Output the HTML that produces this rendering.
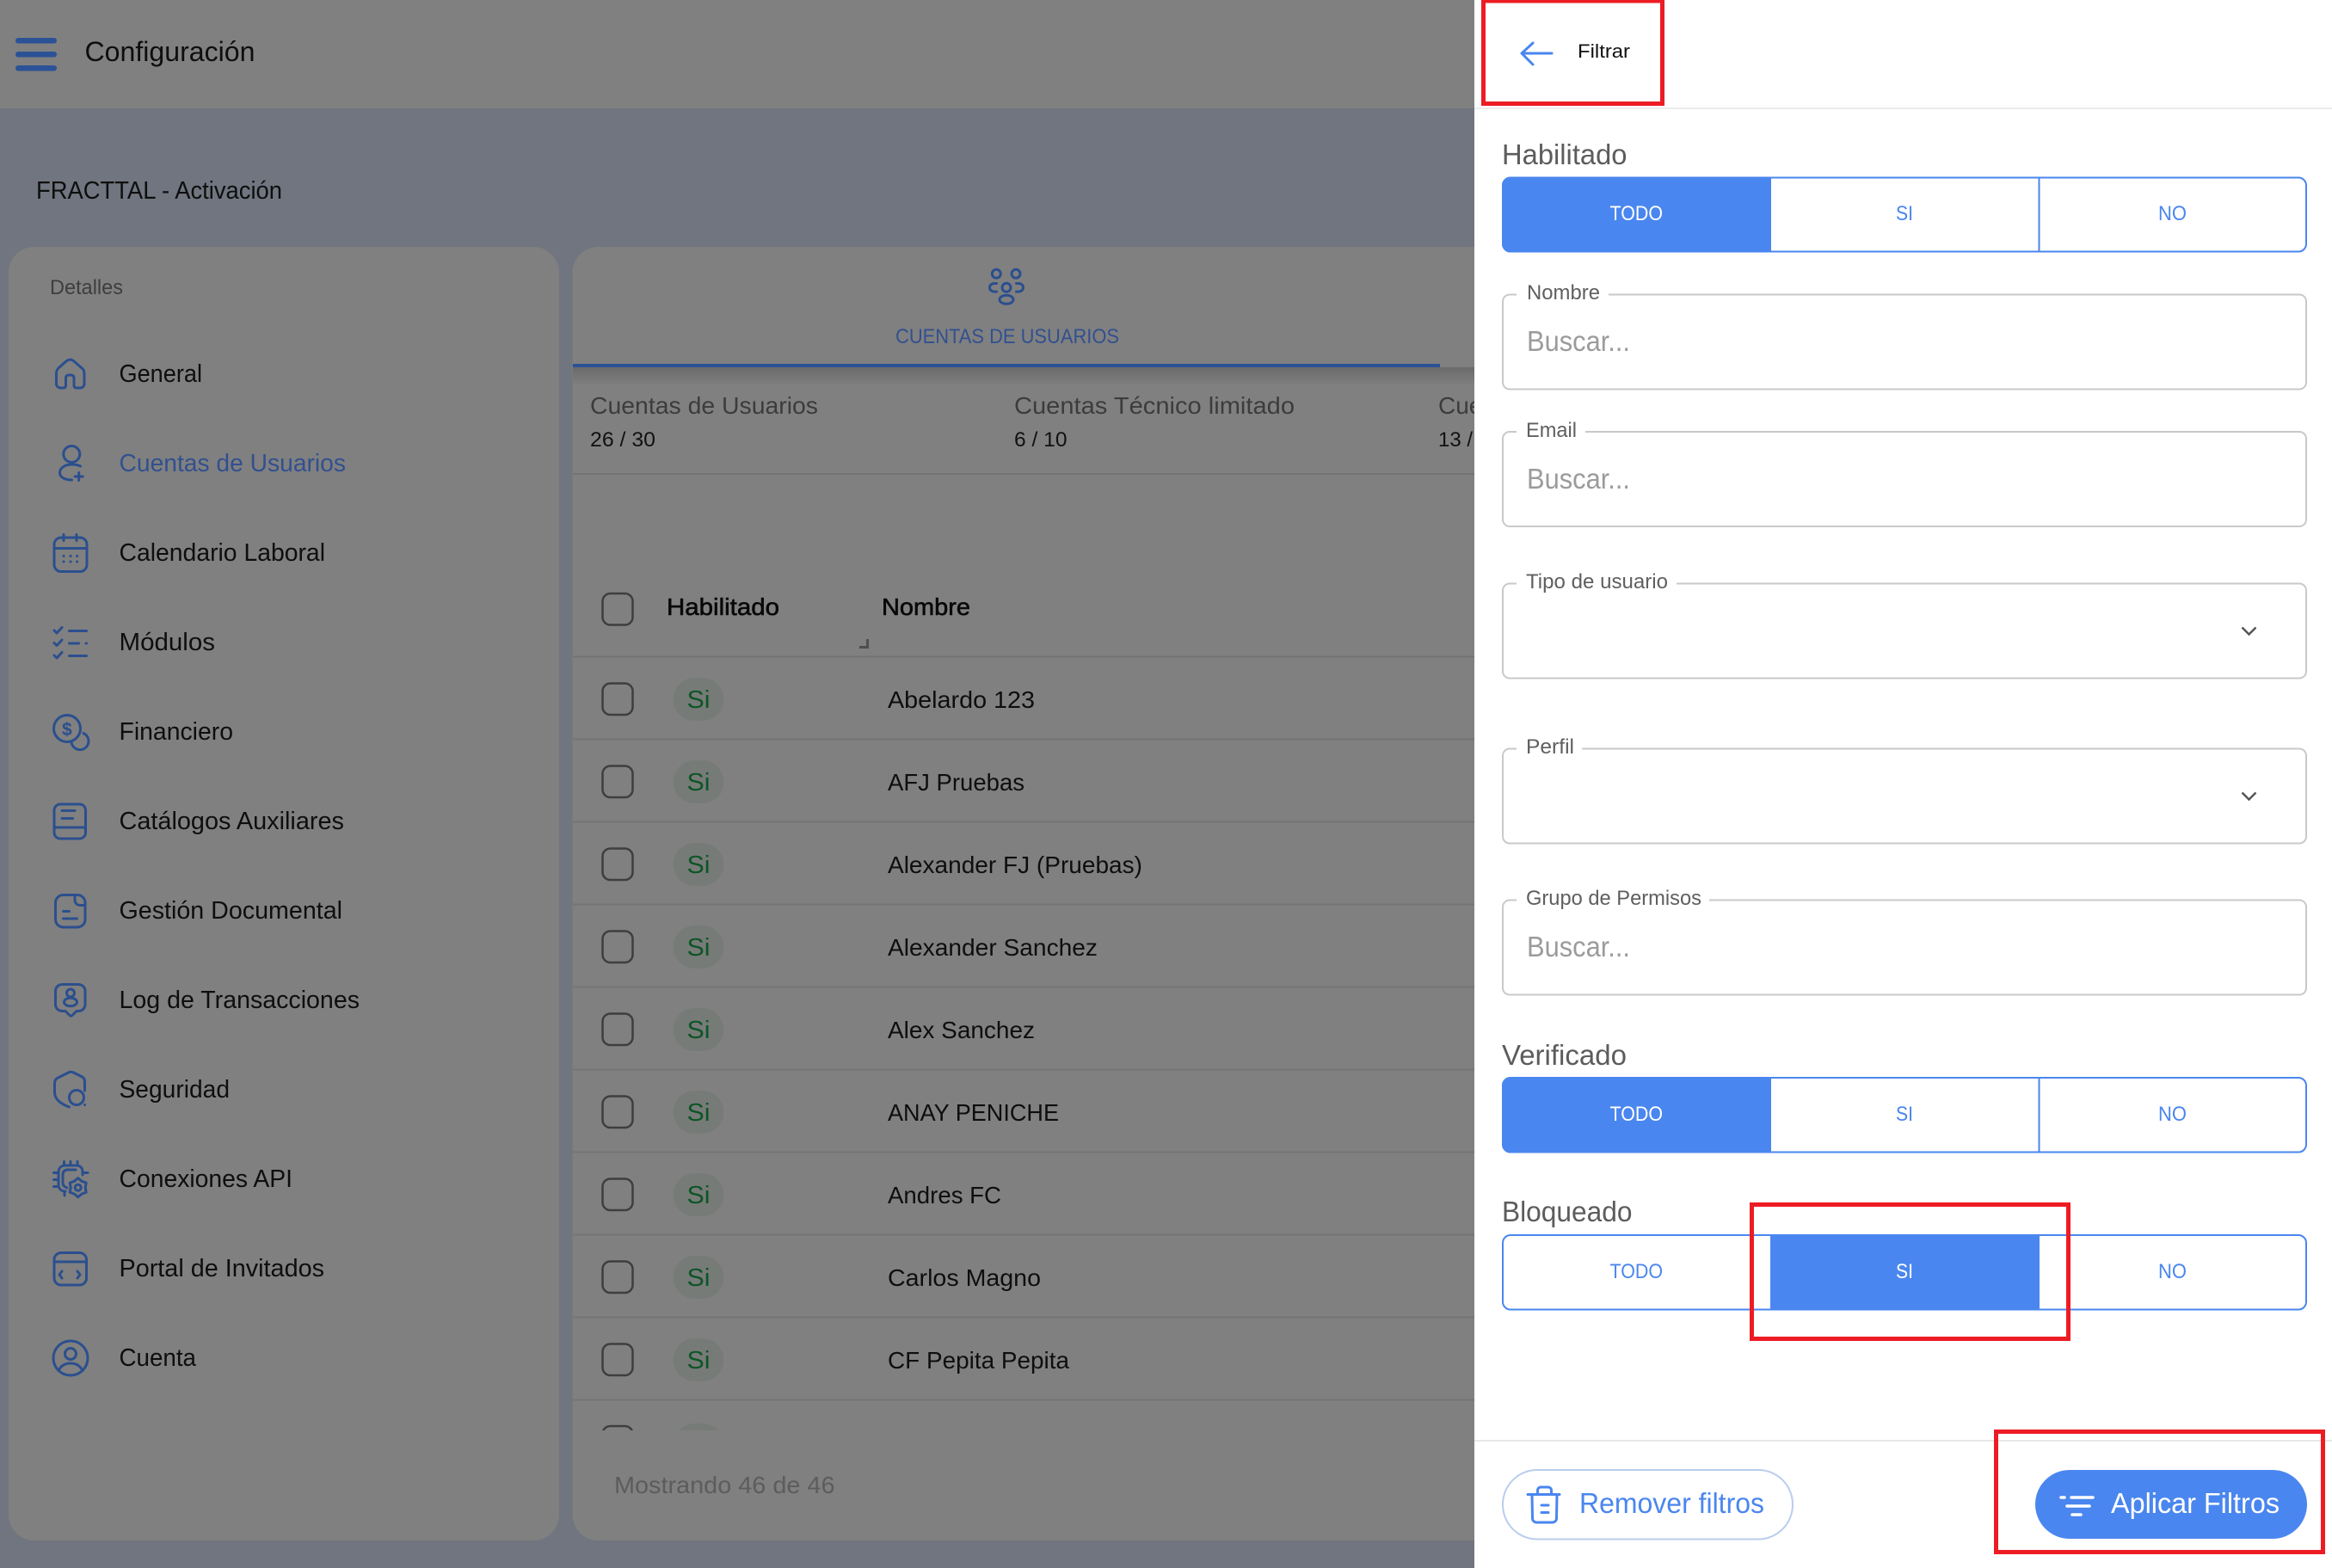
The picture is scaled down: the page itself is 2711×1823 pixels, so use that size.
<!DOCTYPE html>
<html lang="es"><head><meta charset="utf-8"><title>Filtrar</title>
<style>
html,body{margin:0;padding:0;width:2711px;height:1823px;overflow:hidden;background:#70757f}
svg{display:block}
text{font-family:"Liberation Sans",Arial,sans-serif;white-space:pre}
.m{font-size:29px;fill:#0e0e0e}
.r{font-size:28px;fill:#0e0e0e}
.si{font-size:29px;fill:#0d5526}
.lab{font-size:24px;fill:#5f5f5f}
.ph{font-size:33px;fill:#9b9b9b}
.h{font-size:33px;fill:#5c5c5c}
.t{font-size:24px;fill:#4a86ef}
.w{font-size:24px;fill:#fff}
.ic{fill:none;stroke:#2b4f8e;stroke-width:3;stroke-linecap:round;stroke-linejoin:round}
.bl{fill:none;stroke:#4a86ef;stroke-width:3;stroke-linecap:round;stroke-linejoin:round}
.cb{fill:none;stroke:#3e3e3e;stroke-width:2.5}
.chip{fill:#777b78}
.ln{stroke:#747474;stroke-width:2}
.fs{fill:none;stroke:#c9c9c9;stroke-width:2}
.gr{fill:#fff;stroke:#4a86ef;stroke-width:2}
</style></head>
<body>
<svg xmlns="http://www.w3.org/2000/svg" width="2711" height="1823" viewBox="0 0 2711 1823">
<defs>
<linearGradient id="sh" x1="0" y1="0" x2="0" y2="1"><stop offset="0" stop-color="#6a6a6a"/><stop offset="1" stop-color="#808080"/></linearGradient>
<clipPath id="tb"><rect x="665" y="764" width="1060" height="899"/></clipPath>
</defs>
<rect width="2711" height="1823" fill="#70757f"/>
<!-- top bar -->
<rect width="1714" height="126" fill="#808080"/>
<rect x="18" y="44" width="48" height="6.500" rx="3.200" fill="#2b5296"/>
<rect x="18" y="60" width="48" height="6.500" rx="3.200" fill="#2b5296"/>
<rect x="18" y="76" width="48" height="6.500" rx="3.200" fill="#2b5296"/>
<text x="98.500" y="71" font-size="32" fill="#0e0e0e" textLength="198" lengthAdjust="spacingAndGlyphs">Configuración</text>
<text x="42" y="231" font-size="29" fill="#0e0e0e" textLength="286" lengthAdjust="spacingAndGlyphs">FRACTTAL - Activación</text>

<!-- left card -->
<rect x="10" y="287" width="640" height="1504" rx="30" fill="#808080"/>
<text x="58" y="342" font-size="24" fill="#3e3e3e" textLength="85" lengthAdjust="spacingAndGlyphs">Detalles</text>
<text class="m" x="138.500" y="444" textLength="96.500" lengthAdjust="spacingAndGlyphs">General</text>
<text class="m" x="138.500" y="548" style="fill:#32508f" textLength="263.500" lengthAdjust="spacingAndGlyphs">Cuentas de Usuarios</text>
<text class="m" x="138.500" y="652" textLength="239.500" lengthAdjust="spacingAndGlyphs">Calendario Laboral</text>
<text class="m" x="138.500" y="756" textLength="111.500" lengthAdjust="spacingAndGlyphs">Módulos</text>
<text class="m" x="138.500" y="860" textLength="132.500" lengthAdjust="spacingAndGlyphs">Financiero</text>
<text class="m" x="138.500" y="964" textLength="261.500" lengthAdjust="spacingAndGlyphs">Catálogos Auxiliares</text>
<text class="m" x="138.500" y="1068" textLength="259.500" lengthAdjust="spacingAndGlyphs">Gestión Documental</text>
<text class="m" x="138.500" y="1172" textLength="279.500" lengthAdjust="spacingAndGlyphs">Log de Transacciones</text>
<text class="m" x="138.500" y="1276" textLength="128.500" lengthAdjust="spacingAndGlyphs">Seguridad</text>
<text class="m" x="138.500" y="1380" textLength="201.500" lengthAdjust="spacingAndGlyphs">Conexiones API</text>
<text class="m" x="138.500" y="1484" textLength="238.500" lengthAdjust="spacingAndGlyphs">Portal de Invitados</text>
<text class="m" x="138.500" y="1588" textLength="89.500" lengthAdjust="spacingAndGlyphs">Cuenta</text>

<!-- sidebar icons -->
<path class="ic" d="M65.500 446V434c0-3 1-5 3.500-7l8-7c3-2.500 6-2.500 9 0l8 7c3 2 4 4 4 7v12c0 3-2 5-5 5h-4c-2 0-3-1-3-3v-8c0-3-1.500-4-4-4h-2c-2.500 0-3.500 1-3.500 4v8c0 2-1 3-3 3h-3c-3 0-5-2-5-5z"/>
<circle class="ic" cx="83.300" cy="528" r="9.500"/>
<path class="ic" d="M93.500 542c-3-1.500-6-2-10-2-8 0-14 4-14 9.500 0 5.500 6 8.500 14 8.500"/>
<path class="ic" d="M91.700 549.500v9M87.200 554h9"/>
<rect class="ic" x="63" y="625" width="38" height="39.500" rx="8"/>
<path class="ic" d="M63 637.500h38M74 621.500v7M89 621.500v7"/>
<path class="ic" stroke-width="3.500" d="M74 646.500h.1M82 646.500h.1M89.500 646.500h.1M74 653h.1M82 653h.1M89.500 653h.1"/>
<path class="ic" d="M63 733l3 3 6-6.500M63 747.500l3 3 6-6.500M63 762l3 3 6-6.500M80.500 733.500h20M80.500 748h11M100 748h.5M80.500 762.500h20"/>
<circle class="ic" cx="78" cy="847" r="15.500"/>
<path class="ic" d="M97 852.500A10 10 0 1 1 83 862.500"/>
<text x="72" y="855" font-size="21" font-weight="bold" fill="#2b4f8e">$</text>
<rect class="ic" x="63" y="935" width="36.500" height="40" rx="7"/>
<path class="ic" d="M63 962h36.500M72 942.500h15M72 951.500h12.500"/>
<rect class="ic" x="64.500" y="1040.500" width="34.500" height="37.500" rx="9"/>
<path class="ic" d="M87 1041v5c0 4 2.500 6.500 6.500 6.500h5.500M73.500 1059.500h7M73.500 1068h16"/>
<path class="ic" d="M73 1144.500h17.500c5 0 8.500 3 8.500 8v15c0 5-3.500 8-8 8h-2l-5 5c-1 1-2 1-3 0l-5-5h-3c-5 0-8.500-3-8.500-8v-15c0-5 3.500-8 8.500-8z"/>
<circle class="ic" cx="82" cy="1154.500" r="4.500"/>
<ellipse class="ic" cx="82" cy="1165" rx="7.500" ry="4.800"/>
<path class="ic" d="M98.500 1268v-10c0-3-1-5-3-6l-10-5c-2-1-4-1-6 0l-10 5c-4 1.500-6 3.500-6 7v11c0 7 6 13 17 17"/>
<circle class="ic" cx="89" cy="1276" r="8.500"/>
<path class="ic" d="M98.500 1284.500h.1"/>
<path class="ic" d="M96 1366v-4c0-4-3-7-7-7H76c-5 0-8 3-8 8v14c0 5 3 8 8 8M78 1381c-3-1-5-3-5-6v-9c0-4 2-6 6-6h9M74.500 1350.500v4.500M82 1350.500v4.500M90 1350.500v4.500M98 1363.500h4M62.500 1363.500h5M62.500 1371.500h5M62.500 1379.500h5M75 1385.500v4.500"/>
<path class="ic" transform="translate(90.700 1380.700)" d="M0-11 4.300-7.400 9.500-5.500 8.500 0 9.500 5.500 4.300 7.400 0 11-4.300 7.400-9.500 5.500-8.500 0-9.500-5.500-4.300-7.400z"/>
<circle class="ic" cx="90.700" cy="1380.700" r="3.500"/>
<rect class="ic" x="63" y="1456.500" width="37.500" height="37.500" rx="8"/>
<path class="ic" d="M63 1467h37.500M72 1478l-3 4 3 4M90 1478l3 4-3 4"/>
<circle class="ic" cx="82" cy="1579" r="20"/>
<circle class="ic" cx="82" cy="1574" r="6.500"/>
<path class="ic" d="M68 1593.500c3-6 8-8.500 14-8.500s11 2.500 14 8.500"/>

<!-- right card -->
<rect x="665.500" y="287" width="1200" height="1504" rx="30" fill="#808080"/>
<circle class="ic" cx="1158.300" cy="318.300" r="5"/>
<circle class="ic" cx="1181" cy="318.300" r="5"/>
<circle class="ic" cx="1170" cy="334.300" r="5"/>
<ellipse class="ic" cx="1170" cy="348.300" rx="8" ry="5"/>
<path class="ic" d="M1158.500 329.500h-2c-4 0-6 2-6 4.800s2 4.800 6 4.800h2M1181.500 329.500h2c4 0 6 2 6 4.800s-2 4.800-6 4.800h-2"/>
<text x="1041" y="399" font-size="24" fill="#32508f" textLength="260" lengthAdjust="spacingAndGlyphs">CUENTAS DE USUARIOS</text>
<rect x="666" y="423" width="1008" height="4" fill="#2b5296"/>
<rect x="666" y="427" width="1048" height="22" fill="url(#sh)"/>
<text x="686" y="481" font-size="28" fill="#3c3c3c" textLength="265" lengthAdjust="spacingAndGlyphs">Cuentas de Usuarios</text>
<text x="686" y="519" font-size="24" fill="#111" textLength="76" lengthAdjust="spacingAndGlyphs">26 / 30</text>
<text x="1179" y="481" font-size="28" fill="#3c3c3c" textLength="326" lengthAdjust="spacingAndGlyphs">Cuentas Técnico limitado</text>
<text x="1179" y="519" font-size="24" fill="#111" textLength="61.500" lengthAdjust="spacingAndGlyphs">6 / 10</text>
<text x="1672" y="481" font-size="28" fill="#3c3c3c">Cuentas</text>
<text x="1672" y="519" font-size="24" fill="#111">13 / 20</text>
<line class="ln" x1="666" y1="551" x2="1714" y2="551"/>
<rect class="cb" x="700.500" y="690" width="35" height="36.500" rx="9"/>
<text x="775" y="715" font-size="28" fill="#080808" stroke="#080808" stroke-width=".6" textLength="131" lengthAdjust="spacingAndGlyphs">Habilitado</text>
<text x="1025" y="715" font-size="28" fill="#080808" stroke="#080808" stroke-width=".6" textLength="103" lengthAdjust="spacingAndGlyphs">Nombre</text>
<path d="M999 752.500h9.500V743" fill="none" stroke="#4e4e4e" stroke-width="3"/>
<g class="lines">
<line class="ln" x1="666" y1="763.500" x2="1714" y2="763.500"/><line class="ln" x1="666" y1="859.500" x2="1714" y2="859.500"/><line class="ln" x1="666" y1="955.500" x2="1714" y2="955.500"/><line class="ln" x1="666" y1="1051.500" x2="1714" y2="1051.500"/><line class="ln" x1="666" y1="1147.500" x2="1714" y2="1147.500"/><line class="ln" x1="666" y1="1243.500" x2="1714" y2="1243.500"/><line class="ln" x1="666" y1="1339.500" x2="1714" y2="1339.500"/><line class="ln" x1="666" y1="1435.500" x2="1714" y2="1435.500"/><line class="ln" x1="666" y1="1531.500" x2="1714" y2="1531.500"/><line class="ln" x1="666" y1="1627.500" x2="1714" y2="1627.500"/>
</g>
<g>
<rect class="cb" x="700.500" y="794.500" width="35" height="36.500" rx="9"/><rect class="chip" x="782.500" y="788" width="59" height="50" rx="25"/><text class="si" x="798.500" y="823" textLength="27" lengthAdjust="spacingAndGlyphs">Si</text><text class="r" x="1032" y="823" textLength="171" lengthAdjust="spacingAndGlyphs">Abelardo 123</text>
<rect class="cb" x="700.500" y="890.500" width="35" height="36.500" rx="9"/><rect class="chip" x="782.500" y="884" width="59" height="50" rx="25"/><text class="si" x="798.500" y="919" textLength="27" lengthAdjust="spacingAndGlyphs">Si</text><text class="r" x="1032" y="919" textLength="159" lengthAdjust="spacingAndGlyphs">AFJ Pruebas</text>
<rect class="cb" x="700.500" y="986.500" width="35" height="36.500" rx="9"/><rect class="chip" x="782.500" y="980" width="59" height="50" rx="25"/><text class="si" x="798.500" y="1015" textLength="27" lengthAdjust="spacingAndGlyphs">Si</text><text class="r" x="1032" y="1015" textLength="296" lengthAdjust="spacingAndGlyphs">Alexander FJ (Pruebas)</text>
<rect class="cb" x="700.500" y="1082.500" width="35" height="36.500" rx="9"/><rect class="chip" x="782.500" y="1076" width="59" height="50" rx="25"/><text class="si" x="798.500" y="1111" textLength="27" lengthAdjust="spacingAndGlyphs">Si</text><text class="r" x="1032" y="1111" textLength="244" lengthAdjust="spacingAndGlyphs">Alexander Sanchez</text>
<rect class="cb" x="700.500" y="1178.500" width="35" height="36.500" rx="9"/><rect class="chip" x="782.500" y="1172" width="59" height="50" rx="25"/><text class="si" x="798.500" y="1207" textLength="27" lengthAdjust="spacingAndGlyphs">Si</text><text class="r" x="1032" y="1207" textLength="171" lengthAdjust="spacingAndGlyphs">Alex Sanchez</text>
<rect class="cb" x="700.500" y="1274.500" width="35" height="36.500" rx="9"/><rect class="chip" x="782.500" y="1268" width="59" height="50" rx="25"/><text class="si" x="798.500" y="1303" textLength="27" lengthAdjust="spacingAndGlyphs">Si</text><text class="r" x="1032" y="1303" textLength="199" lengthAdjust="spacingAndGlyphs">ANAY PENICHE</text>
<rect class="cb" x="700.500" y="1370.500" width="35" height="36.500" rx="9"/><rect class="chip" x="782.500" y="1364" width="59" height="50" rx="25"/><text class="si" x="798.500" y="1399" textLength="27" lengthAdjust="spacingAndGlyphs">Si</text><text class="r" x="1032" y="1399" textLength="132" lengthAdjust="spacingAndGlyphs">Andres FC</text>
<rect class="cb" x="700.500" y="1466.500" width="35" height="36.500" rx="9"/><rect class="chip" x="782.500" y="1460" width="59" height="50" rx="25"/><text class="si" x="798.500" y="1495" textLength="27" lengthAdjust="spacingAndGlyphs">Si</text><text class="r" x="1032" y="1495" textLength="178" lengthAdjust="spacingAndGlyphs">Carlos Magno</text>
<rect class="cb" x="700.500" y="1562.500" width="35" height="36.500" rx="9"/><rect class="chip" x="782.500" y="1556" width="59" height="50" rx="25"/><text class="si" x="798.500" y="1591" textLength="27" lengthAdjust="spacingAndGlyphs">Si</text><text class="r" x="1032" y="1591" textLength="211" lengthAdjust="spacingAndGlyphs">CF Pepita Pepita</text>
<g clip-path="url(#tb)"><rect class="cb" x="700.500" y="1658" width="35" height="36.500" rx="9"/><rect class="chip" x="782.500" y="1655" width="59" height="50" rx="25"/></g>
</g>
<text x="714" y="1736" font-size="28" fill="#5c5c5c" textLength="256.500" lengthAdjust="spacingAndGlyphs">Mostrando 46 de 46</text>

<!-- filter panel -->
<rect x="1714" y="0" width="997" height="1823" fill="#fff"/>
<line x1="1714" y1="126" x2="2711" y2="126" stroke="#ececec" stroke-width="2"/>
<path class="bl" stroke-width="3.500" d="M1804 62h-35M1782 50l-13 12 13 13" fill="none"/>
<text x="1834" y="67" font-size="22" fill="#111" textLength="61" lengthAdjust="spacingAndGlyphs">Filtrar</text>

<text class="h" x="1746" y="191" textLength="145.500" lengthAdjust="spacingAndGlyphs">Habilitado</text>
<rect class="gr" x="1747" y="206.500" width="934" height="86" rx="9"/>
<path d="M2059 205.500H1756a10 10 0 0 0-10 10v68a10 10 0 0 0 10 10h303z" fill="#4a86ef"/>
<line x1="2370.500" y1="206" x2="2370.500" y2="293" stroke="#4a86ef" stroke-width="2"/>
<text class="w" x="1871.500" y="256" textLength="61.500" lengthAdjust="spacingAndGlyphs">TODO</text>
<text class="t" x="2204" y="256" textLength="20" lengthAdjust="spacingAndGlyphs">SI</text>
<text class="t" x="2509" y="256" textLength="33" lengthAdjust="spacingAndGlyphs">NO</text>

<!-- Nombre -->
<path class="fs" d="M1763 342.500H1755a8 8 0 0 0-8 8v94a8 8 0 0 0 8 8h918a8 8 0 0 0 8-8v-94a8 8 0 0 0-8-8H1870"/>
<text class="lab" x="1775" y="348" textLength="85" lengthAdjust="spacingAndGlyphs">Nombre</text>
<text class="ph" x="1775" y="408" textLength="120" lengthAdjust="spacingAndGlyphs">Buscar...</text>
<!-- Email -->
<path class="fs" d="M1763 502H1755a8 8 0 0 0-8 8v94a8 8 0 0 0 8 8h918a8 8 0 0 0 8-8v-94a8 8 0 0 0-8-8H1843"/>
<text class="lab" x="1774" y="508" textLength="59" lengthAdjust="spacingAndGlyphs">Email</text>
<text class="ph" x="1775" y="568" textLength="120" lengthAdjust="spacingAndGlyphs">Buscar...</text>
<!-- Tipo -->
<path class="fs" d="M1763 678.500H1755a8 8 0 0 0-8 8v94a8 8 0 0 0 8 8h918a8 8 0 0 0 8-8v-94a8 8 0 0 0-8-8H1949"/>
<text class="lab" x="1774" y="684" textLength="165" lengthAdjust="spacingAndGlyphs">Tipo de usuario</text>
<path d="M2606.500 729.500l8 8 8-8" fill="none" stroke="#555" stroke-width="2.500"/>
<!-- Perfil -->
<path class="fs" d="M1763 870.500H1755a8 8 0 0 0-8 8v94a8 8 0 0 0 8 8h918a8 8 0 0 0 8-8v-94a8 8 0 0 0-8-8H1839"/>
<text class="lab" x="1774" y="876" textLength="56" lengthAdjust="spacingAndGlyphs">Perfil</text>
<path d="M2606.500 921.500l8 8 8-8" fill="none" stroke="#555" stroke-width="2.500"/>
<!-- Grupo -->
<path class="fs" d="M1763 1046.500H1755a8 8 0 0 0-8 8v94a8 8 0 0 0 8 8h918a8 8 0 0 0 8-8v-94a8 8 0 0 0-8-8H1987"/>
<text class="lab" x="1774" y="1052" textLength="204" lengthAdjust="spacingAndGlyphs">Grupo de Permisos</text>
<text class="ph" x="1775" y="1112" textLength="120" lengthAdjust="spacingAndGlyphs">Buscar...</text>

<!-- Verificado -->
<text class="h" x="1746" y="1238" textLength="145" lengthAdjust="spacingAndGlyphs">Verificado</text>
<rect class="gr" x="1747" y="1253" width="934" height="86.500" rx="9"/>
<path d="M2059 1252H1756a10 10 0 0 0-10 10v68.500a10 10 0 0 0 10 10h303z" fill="#4a86ef"/>
<line x1="2370.500" y1="1252" x2="2370.500" y2="1340" stroke="#4a86ef" stroke-width="2"/>
<text class="w" x="1871.500" y="1303" textLength="61.500" lengthAdjust="spacingAndGlyphs">TODO</text>
<text class="t" x="2204" y="1303" textLength="20" lengthAdjust="spacingAndGlyphs">SI</text>
<text class="t" x="2509" y="1303" textLength="33" lengthAdjust="spacingAndGlyphs">NO</text>

<!-- Bloqueado -->
<text class="h" x="1746" y="1420" textLength="151.500" lengthAdjust="spacingAndGlyphs">Bloqueado</text>
<rect class="gr" x="1747" y="1436" width="934" height="86.500" rx="9"/>
<rect x="2058" y="1435" width="313" height="88.500" fill="#4a86ef"/>
<text class="t" x="1871.500" y="1486" textLength="61.500" lengthAdjust="spacingAndGlyphs">TODO</text>
<text class="w" x="2204" y="1486" textLength="20" lengthAdjust="spacingAndGlyphs">SI</text>
<text class="t" x="2509" y="1486" textLength="33" lengthAdjust="spacingAndGlyphs">NO</text>

<!-- footer -->
<line x1="1714" y1="1675" x2="2711" y2="1675" stroke="#e8e8e8" stroke-width="2"/>
<rect x="1747" y="1709" width="337" height="80.500" rx="40" fill="#fff" stroke="#b9cdee" stroke-width="2"/>
<path class="bl" d="M1776 1737.500h37M1787.500 1737v-4c0-2.500 1.500-4 4-4h8c2.500 0 4 1.500 4 4v4M1781 1738l.5 27c0 3 2 5 5 5h18c3 0 5-2 5-5l.5-27M1792 1750h8M1792 1758.500h8"/>
<text x="1836" y="1759" font-size="33" fill="#4a86ef" textLength="215" lengthAdjust="spacingAndGlyphs">Remover filtros</text>
<rect x="2366" y="1709" width="316" height="80" rx="40" fill="#4a86ef"/>
<path d="M2396 1741h4M2408 1741h25M2403 1751h26M2409 1761h10" fill="none" stroke="#fff" stroke-width="3.500" stroke-linecap="round"/>
<text x="2454" y="1759" font-size="33" fill="#fff" textLength="196" lengthAdjust="spacingAndGlyphs">Aplicar Filtros</text>

<!-- red annotation boxes -->
<g fill="none" stroke="#ed1c24" stroke-width="5">
<rect x="1724.500" y="1" width="208" height="119.500"/>
<rect x="2036.500" y="1400.500" width="368" height="156"/>
<rect x="2320.500" y="1664.500" width="380" height="140"/>
</g>
</svg>
</body></html>
